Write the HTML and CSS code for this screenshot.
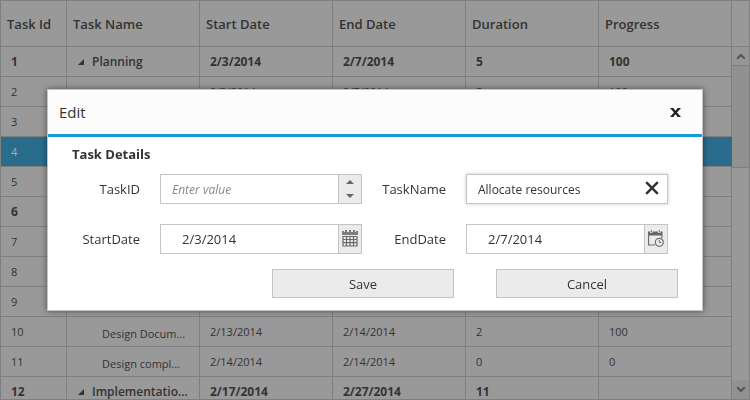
FILE: index.html
```html
<!DOCTYPE html>
<html lang="en">
<head>
<meta charset="utf-8">
<title>Task Grid</title>
<link rel="stylesheet" href="styles.css">
</head>
<body>
<div class="gantt">
  <table class="grid">
    <colgroup>
      <col class="col-id"><col class="col-mid"><col class="col-mid"><col class="col-mid"><col class="col-mid"><col>
    </colgroup>
    <thead>
      <tr><th>Task Id</th><th>Task Name</th><th>Start Date</th><th>End Date</th><th>Duration</th><th>Progress</th></tr>
    </thead>
    <tbody>
      <tr class="parent"><td>1</td><td class="name"><svg class="toggle" viewBox="0 0 6 6"><path d="M6 0V6H0Z"/></svg>Planning</td><td>2/3/2014</td><td>2/7/2014</td><td>5</td><td>100</td></tr>
      <tr><td>2</td><td></td><td>2/3/2014</td><td>2/7/2014</td><td>5</td><td>100</td></tr>
      <tr><td>3</td><td></td><td></td><td></td><td></td><td></td></tr>
      <tr class="selected"><td>4</td><td></td><td></td><td></td><td></td><td></td></tr>
      <tr><td>5</td><td></td><td></td><td></td><td></td><td></td></tr>
      <tr class="parent"><td>6</td><td></td><td></td><td></td><td></td><td></td></tr>
      <tr><td>7</td><td></td><td></td><td></td><td></td><td></td></tr>
      <tr><td>8</td><td></td><td></td><td></td><td></td><td></td></tr>
      <tr><td>9</td><td></td><td></td><td></td><td></td><td></td></tr>
      <tr><td>10</td><td class="child">Design Docum...</td><td>2/13/2014</td><td>2/14/2014</td><td>2</td><td>100</td></tr>
      <tr><td>11</td><td class="child">Design compl...</td><td>2/14/2014</td><td>2/14/2014</td><td>0</td><td>0</td></tr>
      <tr class="parent"><td>12</td><td class="name"><svg class="toggle" viewBox="0 0 6 6"><path d="M6 0V6H0Z"/></svg>Implementatio...</td><td>2/17/2014</td><td>2/27/2014</td><td>11</td><td></td></tr>
    </tbody>
  </table>
  <div class="scrollbar">
    <div class="scroll-head"></div>
    <button class="scroll-up" type="button" aria-label="Scroll up"><svg width="10" height="7" viewBox="0 0 10 7"><path d="M1.2 5.8L5 2L8.800 5.800"/></svg></button>
    <div class="thumb"></div>
    <div class="track"></div>
    <button class="scroll-down" type="button" aria-label="Scroll down"><svg width="10" height="7" viewBox="0 0 10 7"><path d="M1.200 1.200L5 5L8.800 1.200"/></svg></button>
  </div>
</div>

<div class="overlay">
  <form class="dialog" role="dialog" aria-labelledby="dialog-title">
    <header class="dialog-head">
      <h1 id="dialog-title">Edit</h1>
      <button class="close" type="button" aria-label="Close">
        <svg width="11" height="9" viewBox="0 0 11 9"><path d="M2 .5L9 8.500M9 .5L2 8.500" stroke="#222" stroke-width="2.300"/><path d="M.5.6H3.500M7.500.6H10.500M.5 8.400H3.500M7.500 8.400H10.500" stroke="#222" stroke-width="1.200"/></svg>
      </button>
    </header>
    <div class="dialog-body">
      <h2>Task Details</h2>
      <div class="fields">
        <label for="task-id">TaskID</label>
        <div class="control">
          <input id="task-id" class="numeric" type="text" placeholder="Enter value">
          <div class="addon spinner">
            <button type="button" aria-label="Increase"><svg width="8" height="4" viewBox="0 0 8 4"><path d="M0 4L4 0L8 4Z"/></svg></button>
            <button type="button" aria-label="Decrease"><svg width="8" height="4" viewBox="0 0 8 4"><path d="M0 0L4 4L8 0Z"/></svg></button>
          </div>
        </div>
        <label for="task-name">TaskName</label>
        <div class="control focused">
          <input id="task-name" type="text" value="Allocate resources">
          <button class="clear" type="button" aria-label="Clear"><svg width="14" height="14" viewBox="0 0 14 14"><path d="M1.200 1.200L12.800 12.800M12.800 1.200L1.200 12.800" stroke="#333" stroke-width="2.500"/></svg></button>
        </div>
        <label for="start-date">StartDate</label>
        <div class="control">
          <input id="start-date" class="date" type="text" value="2/3/2014">
          <button class="addon" type="button" aria-label="Pick start date">
            <svg width="16" height="17" viewBox="0 0 16 17"><path d="M0 1H2V2H3V0H5V2H7V0H9V2H11V0H13V2H14V1H16V5H0Z" fill="#7d7d7d"/><path d="M1 6.500H15V16H1ZM1 9.500H15M1 12.700H15M4.500 6.500V16M8 6.500V16M11.500 6.500V16" fill="none" stroke="#6a6a6a" stroke-width="1.200"/></svg>
          </button>
        </div>
        <label for="end-date">EndDate</label>
        <div class="control">
          <input id="end-date" class="date" type="text" value="2/7/2014">
          <button class="addon" type="button" aria-label="Pick end date">
            <svg width="16" height="17" viewBox="0 0 16 17"><path d="M0 1.500H2V3H4.500V1.500H10V3H12.500V1.500H14.500V5.500H0Z" fill="#666"/><path d="M2.700 0H4V2.500H2.700ZM10.700 0H12V2.500H10.700Z" fill="#888"/><path d="M.6 5V15H7M13.900 5V8" fill="none" stroke="#6f6f6f" stroke-width="1.200"/><circle cx="11.300" cy="12.300" r="4" fill="#ebebeb" stroke="#6f6f6f" stroke-width="1.200"/><path d="M11.300 10V12.500H13.200" fill="none" stroke="#6f6f6f"/></svg>
          </button>
        </div>
      </div>
      <div class="actions">
        <button class="btn" type="submit">Save</button>
        <button class="btn" type="button">Cancel</button>
      </div>
    </div>
  </form>
</div>
</body>
</html>
```
FILE: styles.css
```css
* { box-sizing: border-box; }

body {
  margin: 0;
  font-family: "Open Sans", "Noto Sans", sans-serif;
  color: #333;
}

button, input { font: inherit; color: inherit; margin: 0; padding: 0; border: 0; background: none; }
svg { display: block; }

/* Task grid */
.gantt {
  display: flex;
  height: 100vh;
  overflow: hidden;
  border: 1px solid #7f7f7f;
  background: #999;
}

.grid {
  flex: 1;
  align-self: flex-start;
  table-layout: fixed;
  width: 0;
  border-collapse: separate;
  border-spacing: 0;
  font-size: 11px;
}

.col-id { width: 66px; }
.col-mid { width: 133px; }

.grid th, .grid td {
  padding: 0 0 0 10px;
  border-right: 1px solid #7f7f7f;
  border-bottom: 1px solid #7f7f7f;
  text-align: left;
  white-space: nowrap;
  overflow: hidden;
}

.grid th {
  height: 46px;
  padding: 0 0 0 6px;
  font-size: 13px;
  font-weight: 600;
}

.grid td { height: 30px; }
.grid .parent td { font-size: 12px; font-weight: 700; }
.grid .parent td.name { font-weight: 600; }
.grid .selected td { background: #2a6c8b; border-right-color: #2a6c8b; color: #aaa; }
.grid td.child { padding: 4px 0 0 35px; }

.toggle {
  display: inline-block;
  width: 6px;
  height: 6px;
  margin: 0 8px 1px 1px;
  fill: #333;
}

.scrollbar {
  display: flex;
  flex-direction: column;
  width: 17px;
}

.scroll-head { height: 46px; border-bottom: 1px solid #7f7f7f; }
.scroll-up, .scroll-down { display: grid; place-items: center; height: 19px; background: #969696; }
.scroll-up { border-bottom: 1px solid #7f7f7f; }
.scrollbar path { fill: none; stroke: #555; stroke-width: 2; }
.thumb { height: 102px; background: #919191; border-bottom: 1px solid #7f7f7f; }
.track { flex: 1; }
.scroll-down { background: #929292; }

/* Edit dialog */
.overlay {
  position: fixed;
  inset: 0;
  display: grid;
  place-items: center;
}

.dialog {
  border: 1px solid #c4c4c4;
  background: #fff;
  box-shadow: 0 0 6px rgba(0, 0, 0, 0.5);
  font-size: 13px;
}

.dialog-head {
  display: flex;
  align-items: center;
  justify-content: space-between;
  height: 47px;
  padding: 0 21px 0 11px;
  border-bottom: 3px solid #179bd7;
  background: #fcfcfc;
}

.dialog h1 { margin: 0; font-size: 15px; font-weight: 400; }
.dialog h2 { margin: 0; font-size: 13px; line-height: 20px; font-weight: 700; }
.close path { fill: none; }
.dialog-body { padding: 7px 24px 12px; }

.fields {
  display: grid;
  grid-template-columns: 68px 202px 64px 202px;
  gap: 20px;
  align-items: center;
  margin: 10px 10px 15px 0;
}

.fields label { text-align: right; }

.control {
  display: flex;
  height: 30px;
  border: 1px solid #c4c4c4;
}

.control.focused { box-shadow: 0 0 4px rgba(0, 0, 0, 0.2); }
.control input { flex: 1; min-width: 0; padding-left: 11px; outline: 0; font-size: 12px; }
.control input.date { padding-left: 21px; font-size: 13px; }
.control input::placeholder { color: #8a8a8a; font-style: italic; opacity: 1; }

.addon {
  display: grid;
  place-items: center;
  width: 23px;
  border-left: 1px solid #c4c4c4;
  background: #ebebeb;
}

button.addon { padding-bottom: 2px; }
.spinner { grid-template-rows: 1fr 1fr; }
.spinner path { fill: #666; }
.clear { width: 30px; padding-bottom: 2px; display: grid; place-items: center; }

.actions { display: flex; justify-content: flex-end; gap: 42px; }

.btn {
  width: 182px;
  height: 29px;
  border: 1px solid #c4c4c4;
  background: #ebebeb;
}
```
